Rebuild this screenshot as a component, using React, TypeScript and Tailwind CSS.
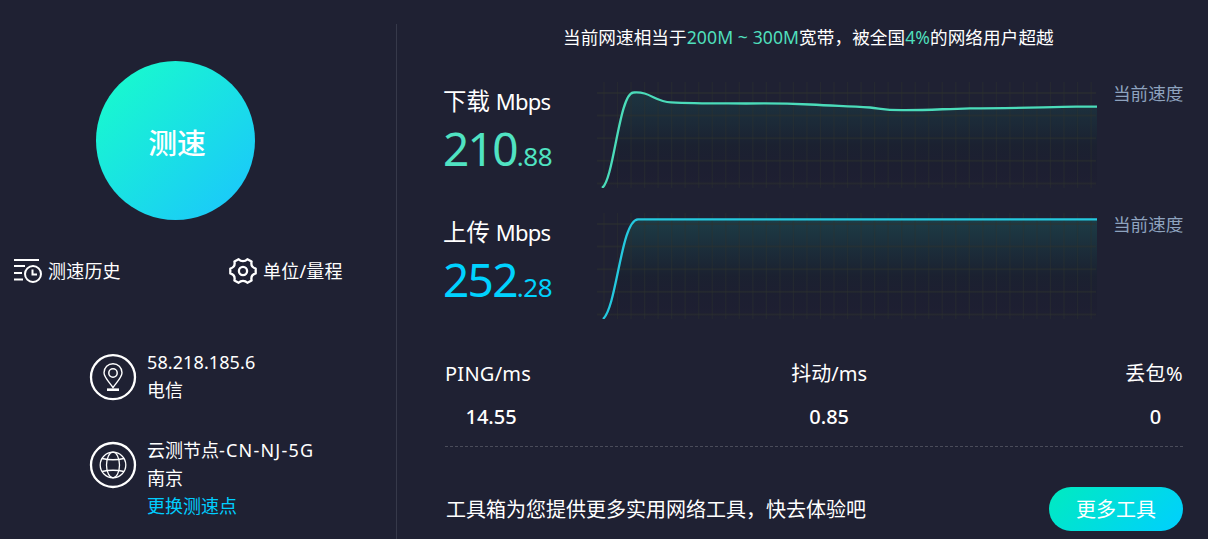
import React from "react";

const columns = Array.from({ length: 37 }, (_, i) => 7 + i * 13.53);
const rows = [12, 34.6, 57.2, 79.8, 102.4];

type ChartProps = { id: string; color: string; line: string; area: string; strength: number };

function SpeedChart({ id, color, line, area, strength }: ChartProps) {
  return (
    <svg width="500" height="107" viewBox="0 0 500 107" fill="none" className="block shrink-0">
      <defs>
        <linearGradient id={id} x1="0" y1="0" x2="0" y2="107" gradientUnits="userSpaceOnUse">
          <stop offset="0.06" stopColor="#14a08c" stopOpacity={strength} />
          <stop offset="0.6" stopColor="#0a2026" stopOpacity="0.2" />
          <stop offset="0.9" stopColor="#100c24" stopOpacity="0.1" />
          <stop offset="1" stopColor="#100c24" stopOpacity="0" />
        </linearGradient>
      </defs>
      <path d={area} fill={`url(#${id})`} />
      {columns.map((x) => (
        <path key={x} d={`M${x} 1V107`} stroke="#2f342f" strokeOpacity="0.4" strokeWidth="1.3" />
      ))}
      {rows.map((y) => (
        <path key={y} d={`M0 ${y}H499`} stroke="#2f342f" strokeOpacity="0.45" strokeWidth="2" />
      ))}
      <path d={line} stroke={color} strokeWidth="2.3" />
    </svg>
  );
}

const downLine =
  "M5 107C17 99 22 12 36.500 11.500C53 10 58 21 74 21.300C97 22.500 120 22.300 149 22.500C172 22 190 22.300 213 23.500C240 25 250 25 273 26.500C284 27.500 287 29.500 308 29.200C335 29 345 28 373 27.300C420 27.300 450 26 479 25.700H500";
const upLine = "M6 107C20 95 24 8 41 7.300H500";

type SpeedProps = {
  label: string;
  whole: string;
  fraction: string;
  valueClass: string;
  chart: ChartProps;
};

function SpeedRow({ label, whole, fraction, valueClass, chart }: SpeedProps) {
  return (
    <section className="flex h-[131px]">
      <div className="w-[154px] shrink-0">
        <h2 className="mt-[4px] text-[23.400px] leading-[32px] whitespace-nowrap">
          {label}
          <span className="ml-[6px] text-[22px] tracking-[-0.800px]">Mbps</span>
        </h2>
        <p className={"mt-[15px] leading-[32px] whitespace-nowrap " + valueClass}>
          <span className="text-[46px] tracking-[-1.700px]">{whole}</span>
          <span className="text-[26px] tracking-[-0.500px]">.{fraction}</span>
        </p>
      </div>
      <SpeedChart {...chart} />
      <span className="ml-[16px] text-[17.600px] leading-[24px] whitespace-nowrap text-[#8ea3bf]">当前速度</span>
    </section>
  );
}

function HistoryIcon() {
  return (
    <svg width="28" height="26" viewBox="0 0 28 26" fill="none" stroke="white" strokeWidth="2">
      <path d="M0 2H25M0 8H11M0 15H8M0 21.500H9" />
      <circle cx="19" cy="16" r="8" />
      <path d="M18.500 11.500V16.500H23" />
    </svg>
  );
}

function GearIcon() {
  return (
    <svg width="28" height="28" viewBox="0 0 28 28" fill="none" stroke="white" strokeWidth="2.300" strokeLinejoin="round">
      <path d="M9.600 2.200C12 4.800 16 4.800 18.400 2.200L22.600 4.600C21.800 8 23.500 10.600 26.700 11.600V16.400C23.500 17.400 21.800 20 22.600 23.400L18.400 25.800C16 23.200 12 23.200 9.600 25.800L5.400 23.400C6.200 20 4.500 17.400 1.300 16.400V11.600C4.500 10.600 6.200 8 5.400 4.600Z" />
      <circle cx="14" cy="14" r="4.100" />
    </svg>
  );
}

function PinIcon() {
  return (
    <svg width="48" height="48" viewBox="0 0 48 48" fill="none" stroke="white" className="shrink-0">
      <circle cx="24" cy="24.200" r="22" strokeWidth="2.300" />
      <path d="M24 34.500C20 29 15 24 15 19.700A9 9 0 0 1 33 19.700C33 24 28 29 24 34.500Z" strokeWidth="1.400" />
      <circle cx="24" cy="20" r="4.200" strokeWidth="1.500" />
      <path d="M18 36.700H30" strokeWidth="2.600" />
    </svg>
  );
}

function GlobeIcon() {
  return (
    <svg width="48" height="48" viewBox="0 0 48 48" fill="none" stroke="white" className="shrink-0">
      <circle cx="24" cy="24" r="22" strokeWidth="2.300" />
      <g strokeWidth="1.300">
        <circle cx="24" cy="24" r="12.800" />
        <ellipse cx="24" cy="24" rx="6.500" ry="12.800" />
        <path d="M13 17.500Q24 20 35 17.500M13 30.500Q24 28 35 30.500" />
      </g>
    </svg>
  );
}

export default function App() {
  return (
    <main className="flex h-[539px] w-[1208px] overflow-hidden bg-[#1f2133] font-['Noto_Sans','Noto_Sans_CJK_SC',sans-serif] text-white">
      <aside className="mt-[24px] flex w-[397px] shrink-0 flex-col border-r border-[#36394a]">
        <button className="mt-[37px] ml-[96px] flex size-[159px] items-center justify-center rounded-full bg-[linear-gradient(135deg,#18ffc9_0%,#1bc3ff_100%)] pt-[5px] pl-[3px] text-[28.800px] leading-[40px] font-medium">
          测速
        </button>
        <nav className="mt-[37px] flex h-[28px] items-center pl-[14px] text-[18px] leading-[28px] tracking-[0.200px] whitespace-nowrap">
          <a className="flex w-[215px] items-center gap-[6px]">
            <HistoryIcon />
            测速历史
          </a>
          <a className="flex items-center gap-[6px]">
            <GearIcon />
            单位/量程
          </a>
        </nav>
        <div className="mt-[63px] ml-[89px] flex gap-[10px] text-[18px] leading-[28px] whitespace-nowrap">
          <div className="pt-[5px]"><PinIcon /></div>
          <div>
            <p className="tracking-[0.100px]">58.218.185.6</p>
            <p>电信</p>
          </div>
        </div>
        <div className="mt-[32px] ml-[89px] flex gap-[10px] text-[18px] leading-[28px] whitespace-nowrap">
          <div className="pt-[5px]"><GlobeIcon /></div>
          <div>
            <p>云测节点<span className="tracking-[1.200px]">-CN-NJ-5G</span></p>
            <p>南京</p>
            <p className="text-[#00ceff]">更换测速点</p>
          </div>
        </div>
      </aside>

      <div className="ml-[46px] w-[740px] shrink-0">
        <p className="mt-[24px] ml-[120px] h-[57px] text-[17.600px] leading-[26px] tracking-[0.080px] whitespace-nowrap">
          当前网速相当于<span className="text-[#4fdfbc]">200M ~ 300M</span>宽带，被全国
          <span className="text-[#4fdfbc]">4%</span>的网络用户超越
        </p>
        <SpeedRow
          label="下载"
          whole="210"
          fraction="88"
          valueClass="text-[#50e3c2]"
          chart={{ id: "downFill", color: "#4bdcba", line: downLine, area: downLine + "V107Z", strength: 0.16 }}
        />
        <SpeedRow
          label="上传"
          whole="252"
          fraction="28"
          valueClass="text-[#00d2ff]"
          chart={{ id: "upFill", color: "#25c9df", line: upLine, area: upLine + "V107Z", strength: 0.22 }}
        />
        <div className="ml-[2px] flex h-[104px] justify-between border-b border-dashed border-[#4a4c5a] pt-[16px] text-[20px] leading-[30px] whitespace-nowrap">
          <div className="text-center">
            <p className="tracking-[0.250px]">PING/ms</p>
            <p className="mt-[13px] pl-[6px] font-medium">14.55</p>
          </div>
          <div className="pl-[2px] text-center">
            <p>抖动/ms</p>
            <p className="mt-[13px] font-medium">0.85</p>
          </div>
          <div className="text-center">
            <p className="tracking-[0.400px]">丢包%</p>
            <p className="mt-[13px] pl-[3px] font-medium">0</p>
          </div>
        </div>
        <div className="mt-[40px] ml-[2px] flex h-[44px] items-center justify-between text-[20px] leading-[30px] whitespace-nowrap">
          <p className="pt-[2px] pl-[1px]">工具箱为您提供更多实用网络工具，快去体验吧</p>
          <button className="h-[44px] w-[134px] rounded-full bg-[linear-gradient(135deg,#00ebc0,#00cfff)] pt-[2px]">
            更多工具
          </button>
        </div>
      </div>
    </main>
  );
}
